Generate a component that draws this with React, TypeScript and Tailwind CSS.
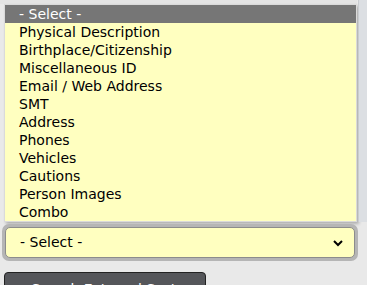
import React from 'react';

const options = [
    'Physical Description',
    'Birthplace/Citizenship',
    'Miscellaneous ID',
    'Email / Web Address',
    'SMT',
    'Address',
    'Phones',
    'Vehicles',
    'Cautions',
    'Person Images',
    'Combo',
];

const App: React.FC = () => {
    return (
        <div className="w-[367px] h-[285px] overflow-hidden bg-[#e9e9e9] font-['DejaVu_Sans',Verdana,sans-serif] text-[14px] flex flex-col">
            <div className="flex shrink-0">
                {/* open dropdown list */}
                <div className="pl-[4px] pt-[4px] bg-[linear-gradient(#e4e4e4_4px,transparent_4px)]">
                    <div className="w-[353px] border border-[#dadada] shadow-[2px_2px_3px_rgba(0,0,0,0.25)] bg-[#ffffc0]">
                        <div className="h-[18px] leading-[18px] pl-[14px] bg-[#767676] text-white">- Select -</div>
                        {options.map((o, i) => (
                            <div key={i} className="h-[18px] leading-[18px] pl-[14px] text-black">{o}</div>
                        ))}
                    </div>
                </div>
                {/* page behind, right edge */}
                <div className="flex-1 ml-[1px] bg-[#dcdfe3] border-l border-[#c9ccd0]" />
            </div>

            {/* closed select */}
            <div className="shrink-0 ml-[2px] mt-[2px] w-[356px] h-[37px] rounded-[7px] bg-[#b5b5b5] p-[3px]">
                <div className="h-full flex items-center justify-between rounded-[5px] border border-[#8c8c8c] bg-[#ffffc0] pl-[14px] pr-[8px] text-black">
                    <span>- Select -</span>
                    <svg width="12" height="8" viewBox="0 0 12 8" className="mr-[2px]">
                        <path d="M2 2 L6 6 L10 2" fill="none" stroke="#000" strokeWidth="2" />
                    </svg>
                </div>
            </div>

            {/* button, partly visible */}
            <div className="ml-[4px] mt-[11px] w-[202px] h-[30px] shrink-0 rounded-t-[4px] border border-[#222] bg-[#55565a] text-white pl-[10px] pt-[9px] leading-none whitespace-nowrap">
                + Search External Systems
            </div>
        </div>
    );
};

export default App;
